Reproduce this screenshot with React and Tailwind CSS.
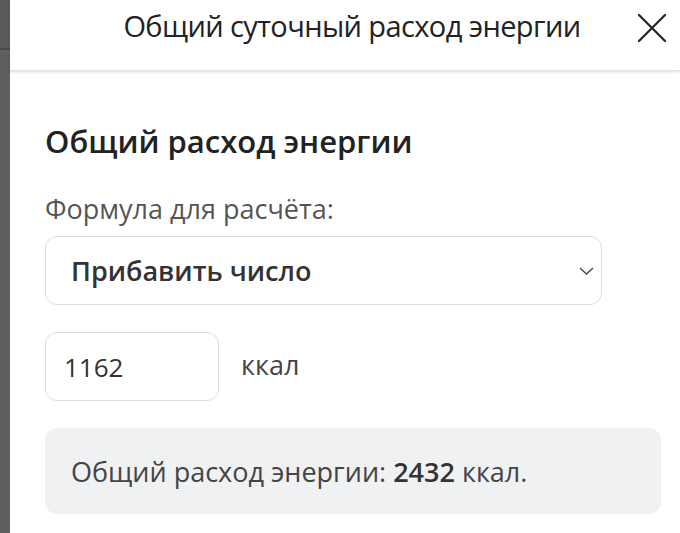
import React from "react";

export default function App() {
  return (
    <div className="flex w-[680px] h-[533px] overflow-hidden bg-[#5f5f5f]" style={{ fontFamily: '"Open Sans", "Noto Sans", sans-serif' }}>
      <div className="w-[10px] shrink-0 flex flex-col">
        <div className="h-[48px] bg-[#5a5a5a]" />
        <div className="h-[2px] bg-[#4a4a4a]" />
        <div className="flex-1 bg-[#5f5f5f]" />
      </div>
      <div className="flex-1 bg-white flex flex-col">
        <div className="relative h-[71px] shrink-0 flex justify-center pt-[11px] pl-[14px] shadow-[0_1px_3px_rgba(0,0,0,0.15)] border-b border-[#e2e2e2]">
          <div className="text-[29px] font-medium tracking-[-0.6px] text-[#222] leading-none">Общий суточный расход энергии</div>
          <svg className="absolute right-[13px] top-[13px]" width="30" height="30" viewBox="0 0 30 30" fill="none" stroke="#222" strokeWidth="2.2" strokeLinecap="round">
            <path d="M2 2 L28 28 M28 2 L2 28" />
          </svg>
        </div>
        <div className="flex flex-col pl-[35px] pr-[19px] pt-[55px]">
          <div className="text-[31px] font-semibold text-[#222] leading-none">Общий расход энергии</div>
          <div className="mt-[38px] text-[27px] text-[#555] leading-none">Формула для расчёта:</div>
          <div className="mt-[14px] w-[557px] h-[69px] rounded-[12px] border border-[#dcdcdc] flex items-center justify-between pl-[25px] pr-[7px]">
            <span className="text-[27px] font-semibold text-[#333] leading-none">Прибавить число</span>
            <svg width="15" height="8" viewBox="0 0 15 8" fill="none" stroke="#444" strokeWidth="1.3">
              <path d="M1 1 L7.5 7 L14 1" />
            </svg>
          </div>
          <div className="mt-[27px] flex gap-[22px]">
            <div className="w-[174px] h-[69px] rounded-[12px] border border-[#dcdcdc] flex items-center pl-[18px]">
              <span className="text-[26px] font-medium text-[#333] leading-none">1162</span>
            </div>
            <span className="mt-[19px] text-[27px] text-[#444] leading-none">ккал</span>
          </div>
          <div className="mt-[27px] w-[616px] h-[86px] rounded-[12px] bg-[#f0f1f3] flex items-center pl-[26px]">
            <span className="text-[27px] text-[#444] leading-none">Общий расход энергии: <span className="font-semibold text-[#333]">2432</span> ккал.</span>
          </div>
        </div>
      </div>
    </div>
  );
}
